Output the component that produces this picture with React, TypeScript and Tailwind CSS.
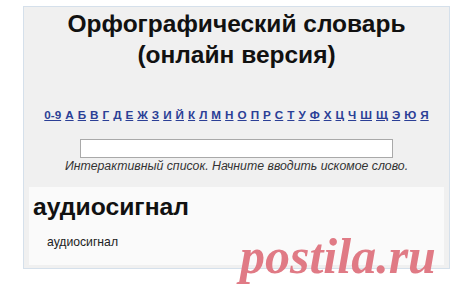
import type { ReactNode } from 'react';

const letters = ['0-9', 'А', 'Б', 'В', 'Г', 'Д', 'Е', 'Ж', 'З', 'И', 'Й', 'К', 'Л', 'М', 'Н', 'О', 'П', 'Р', 'С', 'Т', 'У', 'Ф', 'Х', 'Ц', 'Ч', 'Ш', 'Щ', 'Э', 'Ю', 'Я'];

function Panel({ children }: { children: ReactNode }) {
  return (
    <div className="ml-[23px] mt-[6px] w-[427px] border border-[#d5e0eb] bg-[#f0f0f0] px-[5px] pb-[3px]">{children}</div>
  );
}

export default function App() {
  return (
    <div className="relative h-[301px] w-[460px] overflow-hidden bg-white font-['Liberation_Sans',Arial,sans-serif] text-black">
      <Panel>
        <h1 className="pt-[1px] text-center text-[24.5px] font-bold leading-[31px] text-[#111]">
          Орфографический словарь
          <br />
          (онлайн версия)
        </h1>
        <nav className="mt-[38px] flex justify-center gap-[4px] text-[11.7px] font-bold leading-[14px]">
          {letters.map((l) => (
            <a key={l} href="#" className="text-[#2b3f96] underline">
              {l}
            </a>
          ))}
        </nav>
        <div className="mt-[17px] flex flex-col items-center">
          <input className="h-[19px] w-[313px] border border-[#a9a9a9] bg-white" />
          <p className="mt-[1px] text-[12.3px] italic leading-[14px] text-[#333]">
            Интерактивный список. Начните вводить искомое слово.
          </p>
        </div>
        <section className="mt-[14px] h-[78px] bg-[#fafafa] px-[4px] pt-[6px]">
          <h2 className="text-[24.7px] font-bold leading-[28px] text-[#111]">аудиосигнал</h2>
          <p className="mt-[14px] pl-[14px] text-[12.2px] leading-[14px] text-[#222]">аудиосигнал</p>
        </section>
      </Panel>
      <span className="absolute left-[240px] top-[231px] font-['Liberation_Serif',serif] text-[50px] font-bold italic leading-[50px] text-[#e07a85]">
        postila.ru
      </span>
    </div>
  );
}
